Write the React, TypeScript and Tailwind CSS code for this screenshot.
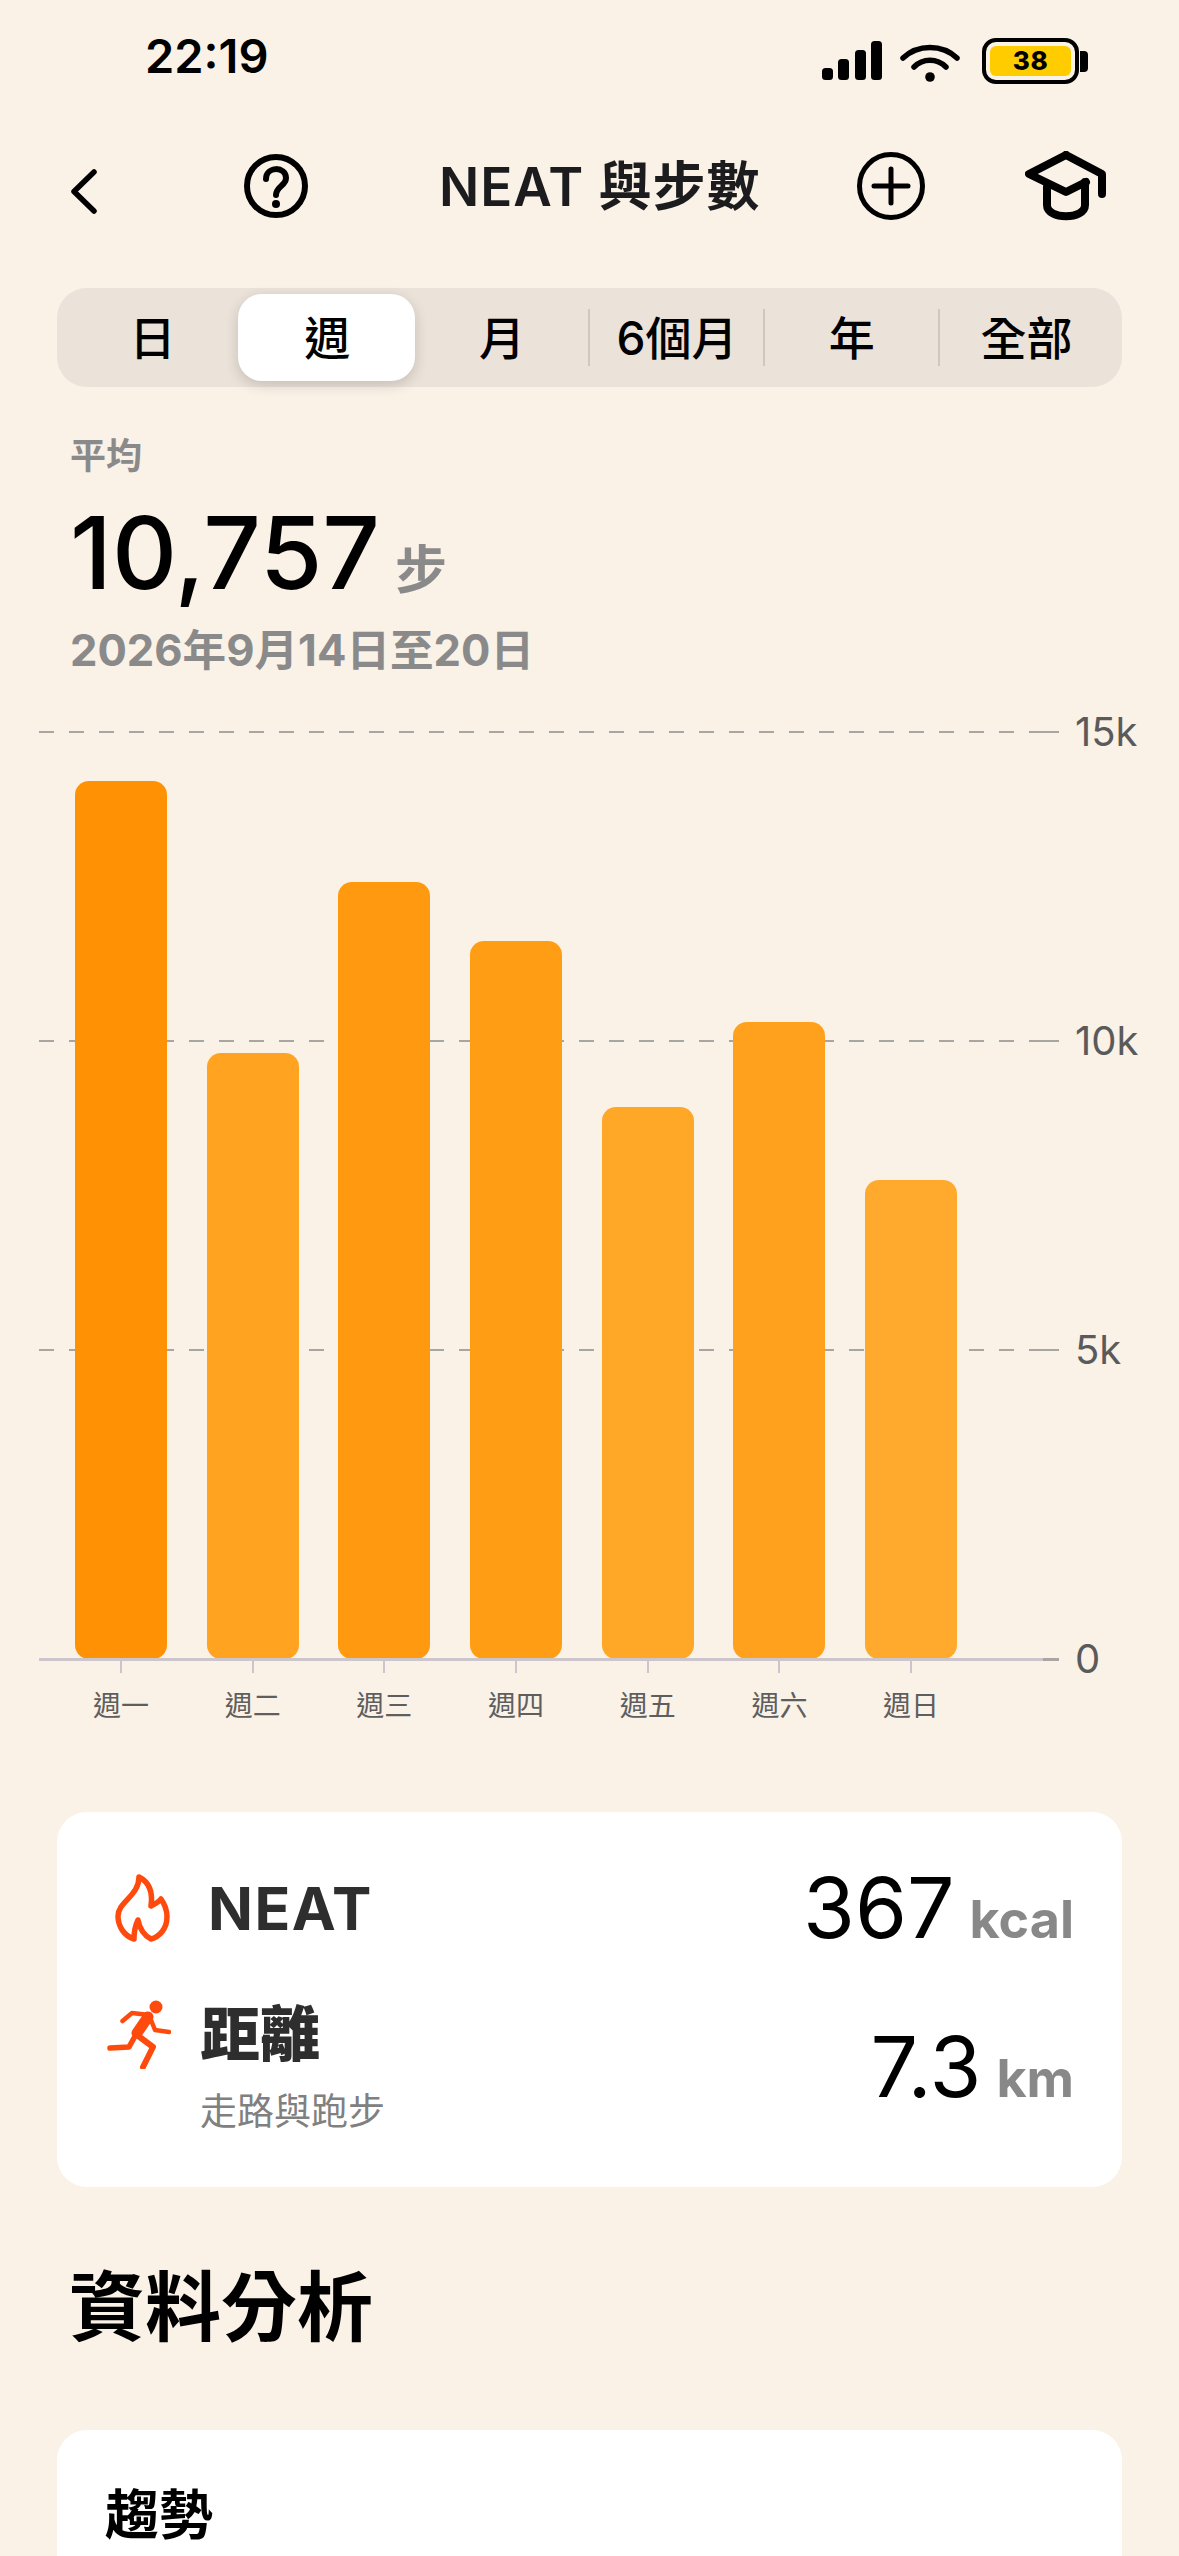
import React from 'react'

const TABS = ['日', '週', '月', '6個月', '年', '全部']
const BARS = [
  { label: '週一', top: 781, color: 'bg-[#ff9204]' },
  { label: '週二', top: 1053, color: 'bg-[#ffa320]' },
  { label: '週三', top: 882, color: 'bg-[#ff9a10]' },
  { label: '週四', top: 941, color: 'bg-[#ff9d15]' },
  { label: '週五', top: 1107, color: 'bg-[#ffa726]' },
  { label: '週六', top: 1022, color: 'bg-[#ffa11c]' },
  { label: '週日', top: 1180, color: 'bg-[#ffaa2c]' },
]
const GRID = [
  { label: '15k', top: 0 },
  { label: '10k', top: 309 },
  { label: '5k', top: 618 },
]

function StatusIcons() {
  return (
    <div className="flex items-center">
      <svg width="60" height="39" viewBox="0 0 60 39" className="mt-[-1px]">
        <rect x="0" y="27" width="11" height="12" rx="3.5" fill="#000" />
        <rect x="16" y="18" width="11" height="21" rx="3.5" fill="#000" />
        <rect x="33" y="9" width="11" height="30" rx="3.5" fill="#000" />
        <rect x="49" y="0" width="11" height="39" rx="3.5" fill="#000" />
      </svg>
      <svg width="60" height="38" viewBox="0 0 60 38" className="ml-[18px] mt-[3px]" fill="none">
        <path d="M3 14 C18 0 42 0 57 14" stroke="#000" strokeWidth="5.5" strokeLinecap="round" />
        <path d="M14 23 C23 14 37 14 46 23" stroke="#000" strokeWidth="5.5" strokeLinecap="round" />
        <circle cx="30" cy="33" r="4.8" fill="#000" />
      </svg>
      <div className="ml-[22px] flex h-[46px] w-[97px] items-center justify-center rounded-[14px] border-[4px] border-black p-[4px]">
        <div className="flex h-full w-full items-center justify-center rounded-[6px] bg-[#ffcc00] text-[26px] font-extrabold leading-none tracking-[0.5px] text-black">38</div>
      </div>
      <div className="ml-[1px] h-[21px] w-[8px] rounded-r-[4px] bg-black" />
    </div>
  )
}

function TabBar() {
  return (
    <div className="mx-[57px] mt-[52px] flex h-[99px] items-center rounded-[30px] bg-[#ebe2d9] px-[8px]">
      {TABS.map((t, i) => (
        <div key={t} className="relative flex h-full w-[175px] items-center justify-center">
          {i === 1 && <div className="absolute left-[-2px] right-0 top-[6px] bottom-[6px] rounded-[24px] bg-white shadow-[0_4px_14px_rgba(0,0,0,0.16)]" />}
          {i >= 3 && <div className="absolute left-[-1px] top-[21px] h-[57px] w-[2px] bg-[#cfc8c1]" />}
          <span className="relative text-[46px] font-medium leading-none text-black">{t}</span>
        </div>
      ))}
    </div>
  )
}

function Chart() {
  return (
    <div className="relative ml-[39px] mt-[55px] w-[1110px]">
      <div className="relative h-[928px] w-[1020px]">
        {GRID.map(g => (
          <div key={g.label} className="absolute left-0 h-[2px] w-[1020px]" style={{ top: g.top }}>
            <div className="h-full w-[1004px] bg-[repeating-linear-gradient(to_right,#a8a6a2_0_15px,transparent_15px_30px)]" />
            <div className="absolute right-0 top-0 h-full w-[16px] bg-[#a8a6a2]" />
            <span className="absolute left-[1036px] top-[-19px] text-[40px] leading-[40px] text-[#5a5a5a]">{g.label}</span>
          </div>
        ))}
        <div className="relative flex h-full items-end gap-[39.7px] pl-[36px]">
          {BARS.map(b => (
            <div key={b.label} className={`w-[92px] rounded-[14px] ${b.color}`} style={{ height: 1659 - b.top }} />
          ))}
        </div>
        <div className="absolute bottom-[-2px] left-0 h-[3px] w-[1020px] bg-[#cdc5cc]">
          <div className="absolute right-0 top-0 h-full w-[16px] bg-[#a8a6a2]" />
          <span className="absolute left-[1036px] top-[-19px] text-[40px] leading-[40px] text-[#5a5a5a]">0</span>
        </div>
      </div>
      <div className="flex gap-[39.7px] pl-[36px]">
        {BARS.map(b => (
          <div key={b.label} className="flex w-[92px] flex-col items-center">
            <div className="h-[14px] w-[2px] bg-[#cdc5cc]" />
            <span className="mt-[18px] text-[28px] leading-[30px] text-[#5e5e5e]">{b.label}</span>
          </div>
        ))}
      </div>
    </div>
  )
}

function FlameIcon() {
  return (
    <svg width="55" height="68" viewBox="0 0 55 68" fill="none">
      <path
        d="M24 3 C34 8 38 18 36 32 C40 30 44 28 46 25 C51 32 52 38 52 43 C52 55 44 63 36 65 C30 62 25 56 23 46 C20 52 19 58 19 65 C9 62 3 52 3 42 C3 28 24 22 24 3 Z"
        stroke="#ff4a0d"
        strokeWidth="5.5"
        strokeLinejoin="round"
      />
    </svg>
  )
}

function RunnerIcon() {
  return (
    <svg width="64" height="69" viewBox="0 0 64 69" fill="none" stroke="#ff4a0d" strokeLinecap="round" strokeLinejoin="round">
      <circle cx="49" cy="7" r="6.5" fill="#ff4a0d" stroke="none" />
      <path d="M41 17 L30 33" strokeWidth="11" />
      <path d="M15.5 21 L25 13 L42 15 L48 30 L62 32" strokeWidth="4.5" />
      <path d="M30 35 L46 47 L36 67" strokeWidth="6" />
      <path d="M27 38 L22 47 L3 48" strokeWidth="5.5" />
    </svg>
  )
}

function Metric({ value, unit }: { value: string, unit: string }) {
  return (
    <div className="flex items-baseline justify-end">
      <span className="text-[84px] font-normal leading-none text-black">{value}</span>
      <span className="ml-[15px] text-[52px] font-bold leading-none text-[#888888]">{unit}</span>
    </div>
  )
}

export default function App() {
  return (
    <div className="h-[2556px] w-[1179px] overflow-hidden bg-[#faf1e7] font-['Inter','Noto_Sans_CJK_TC',sans-serif]">
      <div className="flex h-[136px] items-start justify-between pl-[145px] pr-[91px] pt-[33px]">
        <span className="text-[47px] font-semibold leading-[45px] text-black">22:19</span>
        <div className="mt-[5px]"><StatusIcons /></div>
      </div>

      <div className="flex h-[100px] items-center pl-[70px]">
        <svg width="27" height="45" viewBox="0 0 27 45" fill="none" className="mt-[10px]">
          <path d="M24 3 L4 22.5 L24 42" stroke="#000" strokeWidth="5.5" strokeLinecap="round" strokeLinejoin="round" />
        </svg>
        <svg width="64" height="64" viewBox="0 0 64 64" fill="none" className="ml-[147px]">
          <circle cx="32" cy="32" r="29" stroke="#000" strokeWidth="6" />
          <path d="M22 25 C22 12 42 12 42 24 C42 32 32 32 32 41" stroke="#000" strokeWidth="6" strokeLinecap="round" />
          <circle cx="32" cy="50" r="4" fill="#000" />
        </svg>
        <span className="ml-[131px] mt-[2px] whitespace-nowrap text-[53px] font-semibold leading-none tracking-[1px] text-[#1c1c1e]">NEAT 與步數</span>
        <svg width="68" height="68" viewBox="0 0 68 68" fill="none" className="ml-[96px]">
          <circle cx="34" cy="34" r="31.5" stroke="#000" strokeWidth="5" />
          <path d="M34 17 V51 M17 34 H51" stroke="#000" strokeWidth="5" strokeLinecap="round" />
        </svg>
        <svg width="82" height="70" viewBox="0 0 82 70" fill="none" className="ml-[100px]" stroke="#000" strokeWidth="8" strokeLinecap="round" strokeLinejoin="round">
          <path d="M41 4 L4 23 L41 41 L61 31" />
          <path d="M41 4 L77 23 V43" />
          <path d="M22 36 V54 C22 69 60 69 60 54 V31" />
        </svg>
      </div>

      <TabBar />

      <div className="pl-[70px] pt-[47px]">
        <div className="text-[36px] font-semibold leading-[44px] text-[#8a8a8a]">平均</div>
        <div className="mt-[19px] flex h-[110px] items-baseline">
          <span className="text-[101px] font-medium leading-[110px] text-black">10,757</span>
          <span className="ml-[15px] text-[52px] font-semibold leading-none text-[#8a8a8a]">步</span>
        </div>
        <div className="mt-[19px] text-[43.6px] font-bold leading-[50px] text-[#8a8a8a]">2026年9月14日至20日</div>
      </div>

      <Chart />

      <div className="mx-[57px] mt-[91px] h-[375px] rounded-[30px] bg-white pl-[50px] pr-[48px]">
        <div className="flex h-[160px] items-center justify-between pt-[32px]">
          <div className="flex items-center pl-[8px]">
            <FlameIcon />
            <span className="ml-[38px] text-[59px] font-bold leading-none tracking-[1.5px] text-[#2e2e2e]">NEAT</span>
          </div>
          <Metric value="367" unit="kcal" />
        </div>
        <div className="mt-[28px] flex items-center justify-between">
          <div className="flex items-start">
            <RunnerIcon />
            <div className="ml-[29px] mt-[-2px]">
              <div className="text-[60px] font-black leading-[72px] text-[#2e2e2e]">距離</div>
              <div className="mt-[20px] text-[37px] leading-[44px] text-[#808080]">走路與跑步</div>
            </div>
          </div>
          <Metric value="7.3" unit="km" />
        </div>
      </div>

      <div className="ml-[69px] mt-[75px] text-[76px] font-bold leading-[90px] text-black">資料分析</div>

      <div className="mx-[57px] mt-[78px] h-[200px] rounded-[30px] bg-white px-[48px] pt-[54px]">
        <div className="text-[54px] font-bold leading-[64px] text-black">趨勢</div>
      </div>
    </div>
  )
}
